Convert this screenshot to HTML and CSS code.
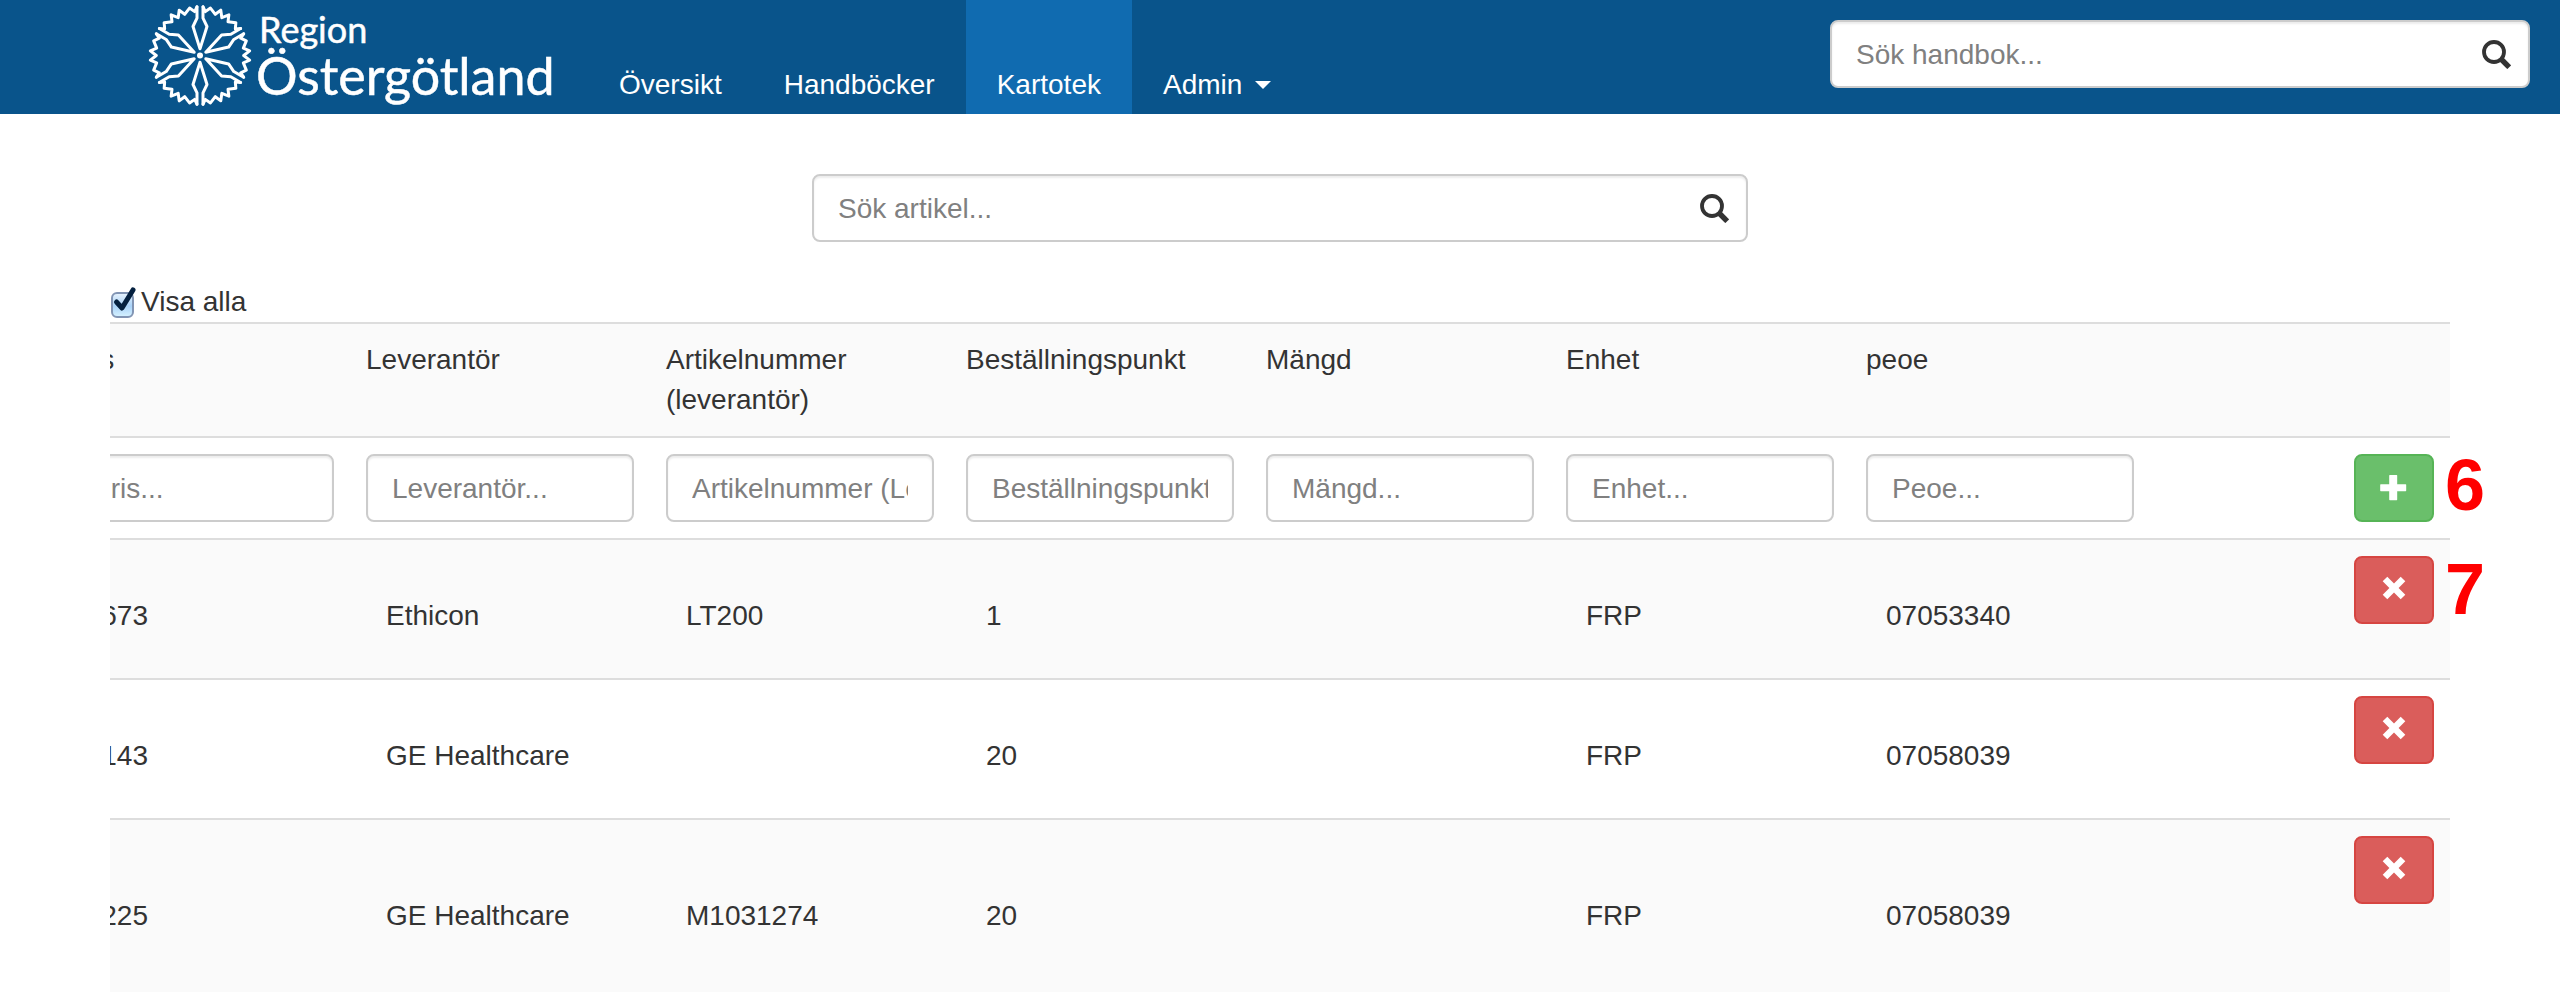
FILE: index.html
```html
<!DOCTYPE html>
<html lang="sv">
<head>
<meta charset="utf-8">
<title>Kartotek – Region Östergötland</title>
<link rel="stylesheet" href="styles.css">
</head>
<body>
<svg class="sprite" aria-hidden="true">
  <defs>
    <symbol id="search" viewBox="0 0 29 29"><circle cx="12" cy="12" r="10" fill="none" stroke="currentColor" stroke-width="3.8"/><path d="M19 19l8.2 8.2" stroke="currentColor" stroke-width="5.4"/></symbol>
    <symbol id="plus" viewBox="0 0 28 28"><path d="M9.8 1h6.8q.6 0 .6.6v8.600h8.400q.6 0 .6.600v5.800q0 .600-.600.600h-8.400v8.400q0 .600-.600.600H9.800q-.600 0-.600-.600v-8.400H.800q-.600 0-.600-.600v-5.800q0-.600.600-.600h8.400V1.600q0-.600.600-.600z" fill="currentColor"/></symbol>
    <symbol id="cross" viewBox="0 0 28 28"><path d="M7.300 .7L14 7.400 20.700 .7 25.300 5.300 18.600 12 25.300 18.700 20.700 23.300 14 16.600 7.300 23.300 2.700 18.700 9.400 12 2.700 5.300z" fill="currentColor"/></symbol>
    <path id="lancet" d="M-9 -146V-112L-21 -87L0 -20L21 -87L9 -112V-146"/>
    <path id="edge" d="M131 -65L122 -52L139 -44L130 -22L149 -14L131 0L149 14L130 22L139 44L122 52L131 65"/>
  </defs>
</svg>

<header class="navbar">
  <a class="brand" href="#" aria-label="Region Östergötland">
    <svg class="logo" viewBox="0 0 400 114">
      <g class="flower" transform="translate(50 55.500) scale(.3333)">
        <circle class="core" r="9"/>
        <use href="#lancet"/><use href="#lancet" transform="rotate(60)"/><use href="#lancet" transform="rotate(120)"/><use href="#lancet" transform="rotate(180)"/><use href="#lancet" transform="rotate(240)"/><use href="#lancet" transform="rotate(300)"/>
        <use href="#edge"/><use href="#edge" transform="rotate(60)"/><use href="#edge" transform="rotate(120)"/><use href="#edge" transform="rotate(180)"/><use href="#edge" transform="rotate(240)"/><use href="#edge" transform="rotate(300)"/>
      </g>
      <text class="logo-small" x="109" y="43">Region</text>
      <text class="logo-large" x="106" y="95">Östergötland</text>
    </svg>
  </a>
  <nav class="menu">
    <a href="#">Översikt</a>
    <a href="#">Handböcker</a>
    <a class="active" href="#" aria-current="page">Kartotek</a>
    <a href="#">Admin<span class="caret"></span></a>
  </nav>
  <form class="search nav-search">
    <input class="field" type="text" placeholder="Sök handbok..." aria-label="Sök handbok">
    <button class="search-button" type="button" aria-label="Sök"><svg><use href="#search"/></svg></button>
  </form>
</header>

<main class="content">
  <form class="search article-search">
    <input class="field" type="text" placeholder="Sök artikel..." aria-label="Sök artikel">
    <button class="search-button" type="button" aria-label="Sök"><svg><use href="#search"/></svg></button>
  </form>

  <label class="show-all">
    <span class="tick"><input type="checkbox" checked><svg viewBox="0 0 28 32"><path d="M6.500 16L12 22 23 4" fill="none" stroke="#04203f" stroke-width="5" stroke-linecap="round" stroke-linejoin="round"/></svg></span>
    Visa alla
  </label>

  <div class="table-area">
    <div class="scroller">
      <table class="articles">
        <thead>
          <tr><th>Pris</th><th>Leverantör</th><th>Artikelnummer (leverantör)</th><th>Beställningspunkt</th><th>Mängd</th><th>Enhet</th><th>peoe</th><th></th></tr>
        </thead>
        <tbody>
          <tr class="filters">
            <td><input class="field" type="text" placeholder="Pris..." aria-label="Pris"></td>
            <td><input class="field" type="text" placeholder="Leverantör..." aria-label="Leverantör"></td>
            <td><input class="field" type="text" placeholder="Artikelnummer (Leverantör)..." aria-label="Artikelnummer (leverantör)"></td>
            <td><input class="field" type="text" placeholder="Beställningspunkt..." aria-label="Beställningspunkt"></td>
            <td><input class="field" type="text" placeholder="Mängd..." aria-label="Mängd"></td>
            <td><input class="field" type="text" placeholder="Enhet..." aria-label="Enhet"></td>
            <td><input class="field" type="text" placeholder="Peoe..." aria-label="Peoe"></td>
            <td class="action"><button class="button add" type="button" aria-label="Lägg till"><svg><use href="#plus"/></svg></button></td>
          </tr>
          <tr class="item">
            <td><span class="price">673</span></td><td>Ethicon</td><td>LT200</td><td>1</td><td></td><td>FRP</td><td>07053340</td>
            <td class="action"><button class="button remove" type="button" aria-label="Ta bort"><svg><use href="#cross"/></svg></button></td>
          </tr>
          <tr class="item">
            <td><span class="price">143</span></td><td>GE Healthcare</td><td></td><td>20</td><td></td><td>FRP</td><td>07058039</td>
            <td class="action"><button class="button remove" type="button" aria-label="Ta bort"><svg><use href="#cross"/></svg></button></td>
          </tr>
          <tr class="item tall">
            <td><span class="price">225</span></td><td>GE Healthcare</td><td>M1031274</td><td>20</td><td></td><td>FRP</td><td>07058039</td>
            <td class="action"><button class="button remove" type="button" aria-label="Ta bort"><svg><use href="#cross"/></svg></button></td>
          </tr>
        </tbody>
      </table>
    </div>
    <span class="callout callout-add">6</span>
    <span class="callout callout-remove">7</span>
  </div>
</main>
</body>
</html>
```

FILE: styles.css
```css
* { box-sizing: border-box; }

body {
  margin: 0;
  height: 100vh;
  overflow: hidden;
  background: #fff;
  color: #333;
  font: 28px/40px "Liberation Sans", Arial, sans-serif;
}

input, button { font: inherit; color: inherit; }

.sprite { position: absolute; width: 0; height: 0; }

/* Top bar */
.navbar {
  display: flex;
  align-items: stretch;
  height: 114px;
  padding: 0 30px 0 150px;
  background: #09548b;
  color: #fff;
}

.brand { display: block; margin-right: 38px; }
.logo { display: block; width: 400px; height: 114px; overflow: visible; fill: #fff; font-family: Lato, sans-serif; }
.logo-small { font-size: 36px; stroke: #fff; stroke-width: .5px; }
.logo-large { font-size: 52px; stroke: #fff; stroke-width: .5px; }
.flower { fill: none; stroke: #fff; stroke-width: 9; stroke-linejoin: round; stroke-linecap: round; }
.core { fill: #fff; stroke: none; }

.menu { display: flex; }
.menu a {
  display: flex;
  align-items: center;
  padding: 56px 31px 0;
  color: #fff;
  text-decoration: none;
}
.menu .active { background: #106bb0; }
.caret {
  margin-left: 13px;
  border: 8px solid transparent;
  border-top-color: #fff;
  border-bottom: 0;
}

/* Text fields */
.field {
  display: block;
  width: 100%;
  height: 68px;
  padding: 13px 24px 11px;
  border: 2px solid #ccc;
  border-radius: 8px;
  background: #fff;
  box-shadow: inset 0 2px 2px rgba(0, 0, 0, .075);
  color: #333;
}
.field::placeholder { color: #808080; opacity: 1; }

.search { position: relative; }
.nav-search { width: 700px; margin: 20px 0 0 auto; }
.article-search { width: 40%; margin: 60px auto 0; }
.search-button {
  position: absolute;
  top: 0;
  right: 0;
  height: 68px;
  padding: 0 19px;
  border: 0;
  background: none;
  color: #333;
}
.search-button svg { display: block; width: 29px; height: 29px; }

/* Page body */
.content { padding: 0 110px; }

.show-all {
  display: flex;
  width: max-content;
  margin-top: 40px;
  gap: 3px;
}
.tick { position: relative; width: 28px; height: 40px; }
.tick input {
  appearance: none;
  display: block;
  width: 23px;
  height: 26px;
  margin: 10px 0 0 1px;
  border: 2px solid #8295b4;
  border-radius: 6px;
  background: linear-gradient(#e4f1fc, #a9d2f8 55%, #d3f0ff);
}
.tick svg { position: absolute; top: 4px; left: 0; width: 28px; height: 32px; pointer-events: none; }

.table-area { position: relative; }
.scroller { display: flex; justify-content: flex-end; overflow: hidden; }

.articles {
  flex: none;
  width: 2400px;
  table-layout: fixed;
  border-spacing: 0;
}
.articles th, .articles td {
  padding: 16px;
  border-top: 2px solid #ddd;
  text-align: left;
  vertical-align: top;
  font-weight: normal;
}
.articles thead tr, .articles .item:nth-child(even) { background: #fafafa; }

.item { height: 140px; }
.tall { height: 180px; }
.articles .item td { padding: 30px 16px 16px 36px; vertical-align: middle; }
.price { display: inline-block; width: 62px; text-align: right; }
.articles .action, .articles .item .action { padding: 16px; vertical-align: top; }

.button {
  display: block;
  width: 80px;
  height: 68px;
  margin-left: auto;
  padding: 0 24px;
  border: 2px solid;
  border-radius: 8px;
}
.button svg { display: block; width: 28px; height: 28px; color: #fff; }
.add { border-color: #56b456; background: #6abf6b; }
.remove { border-color: #d64541; background: #da5d5b; }

/* Numbered markers beside the buttons */
.callout {
  position: absolute;
  right: -35px;
  color: #f00;
  font-size: 72px;
  font-weight: bold;
  line-height: 80px;
}
.callout-add { top: 123px; }
.callout-remove { top: 227px; }
```
